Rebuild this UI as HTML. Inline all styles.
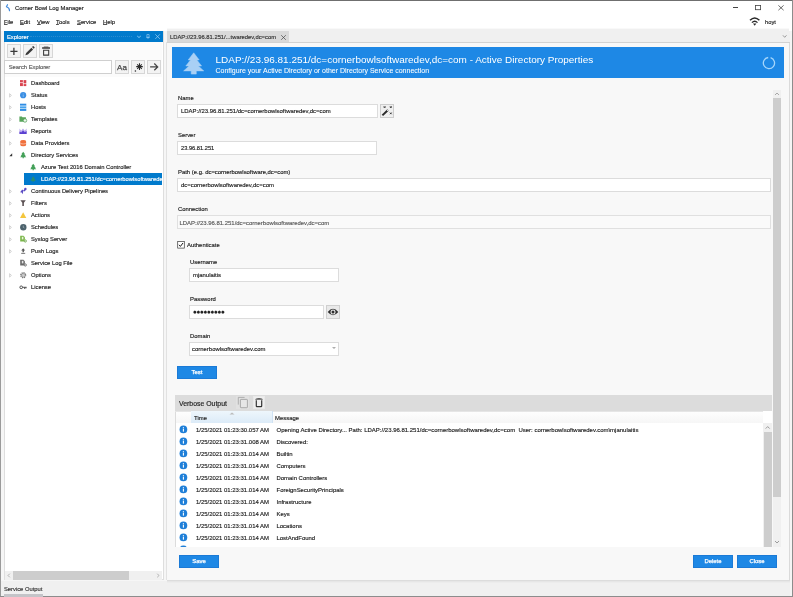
<!DOCTYPE html>
<html><head><meta charset="utf-8">
<style>
*{box-sizing:border-box;margin:0;padding:0}
html,body{width:793px;height:597px;overflow:hidden;background:#f0f0f0}
body{font-family:"Liberation Sans",sans-serif;font-size:5.9px;color:#1a1a1a;position:relative;-webkit-text-stroke:0.15px}
.a{position:absolute;white-space:nowrap}
u{text-decoration-thickness:0.45px;text-underline-offset:0.3px;text-decoration-color:#555}
.t{position:absolute;white-space:nowrap;line-height:10px;height:10px}
.btn{position:absolute;background:#1e88e5;color:#fff;text-align:center;border:1px solid #1b7ad6;-webkit-text-stroke:0.25px}
.inp{position:absolute;background:#fff;border:1px solid #dcdcdc;height:14px;line-height:12px;padding-left:3px;font-size:5.95px;color:#222}
.tb{position:absolute;background:#f3f3f3;border:1px solid #d6d6d6}
.row{position:absolute;left:0;height:12px;line-height:12px;white-space:nowrap}
</style></head><body>
<div id="root" style="position:absolute;left:0;top:0;width:793px;height:597px;will-change:transform">
<!-- window frame -->
<div class="a" style="left:0;top:0;width:793px;height:597px;background:#f0f0f0"></div>
<div class="a" style="left:1px;top:1px;width:791px;height:30px;background:#fff"></div>
<div class="a" style="left:0;top:0;width:793px;height:1px;background:#6f6f6f"></div>
<div class="a" style="left:0;top:0;width:1px;height:597px;background:#9a9a9a"></div>
<div class="a" style="left:792px;top:0;width:1px;height:597px;background:#8c8c8c"></div>
<div class="a" style="left:0;top:596px;width:793px;height:1px;background:#8c8c8c"></div>

<!-- title -->
<svg class="a" style="left:4px;top:2px" width="8" height="11" viewBox="0 0 8 11"><path d="M3.5 2.7 L2.4 4.8 Q5.6 5.7 5.5 8.7" fill="none" stroke="#3f88dc" stroke-width="1.15" stroke-linecap="round" stroke-linejoin="round"/></svg>
<div class="t" id="title" style="left:15px;top:2.5px;font-size:5.9px;color:#222">Corner Bowl Log Manager</div>
<!-- window controls -->
<div class="a" style="left:733px;top:7.2px;width:5.4px;height:0.8px;background:#444"></div>
<svg class="a" style="left:754px;top:4px" width="8" height="7" viewBox="0 0 8 7"><rect x="1.4" y="1.5" width="5.2" height="4.2" fill="none" stroke="#444" stroke-width="0.8"/></svg>
<svg class="a" style="left:778px;top:5px" width="6" height="6" viewBox="0 0 6 6"><path d="M0.4 0.4L5.6 5.2M5.6 0.4L0.4 5.2" stroke="#444" stroke-width="0.8"/></svg>
<!-- menu -->
<div class="t" style="left:4px;top:16.6px;font-size:5.8px;color:#222"><u>F</u>ile</div>
<div class="t" style="left:20px;top:16.6px;font-size:5.8px;color:#222"><u>E</u>dit</div>
<div class="t" style="left:37px;top:16.6px;font-size:5.8px;color:#222"><u>V</u>iew</div>
<div class="t" style="left:56px;top:16.6px;font-size:5.8px;color:#222"><u>T</u>ools</div>
<div class="t" style="left:77px;top:16.6px;font-size:5.8px;color:#222"><u>S</u>ervice</div>
<div class="t" style="left:103px;top:16.6px;font-size:5.8px;color:#222"><u>H</u>elp</div>
<!-- wifi + user -->
<svg class="a" style="left:749px;top:17px" width="12" height="10" viewBox="0 0 12 10"><g fill="none" stroke="#2a2a2a" stroke-width="1.5"><path d="M1 3.3 Q5.7 -1.2 10.4 3.3"/><path d="M2.9 5.6 Q5.7 2.9 8.5 5.6" stroke-width="1.3"/></g><path d="M4 6.4 L7.4 6.4 L5.7 8.7 Z" fill="#2a2a2a"/></svg>
<div class="t" style="left:765px;top:17px;font-size:5.8px;color:#222">hoyt</div>

<!-- Explorer panel -->
<div class="a" style="left:1px;top:31px;width:166px;height:550px;background:#f6f6f6"></div>
<div class="a" style="left:4px;top:31px;width:160px;height:549px;background:#fff;border:1px solid #dedede"></div>
<div class="a" style="left:4px;top:31px;width:159px;height:11px;background:#007acc"></div>
<div class="t" style="left:7px;top:32px;font-size:5.8px;color:#fff">Explorer</div>
<div class="a" style="left:30px;top:36px;width:102px;height:0;border-top:1px dotted #2a8bd0"></div>
<svg class="a" style="left:135px;top:33px" width="26" height="8" viewBox="0 0 26 8"><g fill="none" stroke="#9dd2f6"><path d="M2.2 3L4 4.5L5.8 3" stroke-width="0.85"/><path d="M11.9 1.5h2.2v2.8h-2.2zM11.2 4.4h3.6M13 4.4v1.5" stroke-width="0.6"/><path d="M20.3 1.3L24.9 5.9M24.9 1.3L20.3 5.9" stroke-width="0.7"/></g></svg>
<!-- toolbar -->
<div class="a" style="left:5px;top:42px;width:157px;height:35px;background:#fbfbfb"></div>
<div class="tb" style="left:7px;top:44px;width:14px;height:14px"></div>
<div class="tb" style="left:23px;top:44px;width:14px;height:14px"></div>
<div class="tb" style="left:39px;top:44px;width:14px;height:14px"></div>
<svg class="a" style="left:7px;top:44px" width="14" height="14" viewBox="0 0 14 14"><path d="M6.9 3.7v7.2M3.4 7.3h7.1" stroke="#3a3a3a" stroke-width="1.3"/></svg>
<svg class="a" style="left:23px;top:44px" width="14" height="14" viewBox="0 0 14 14"><path d="M2.3 11.3L3.2 8.9L8.4 3.7L10.1 5.4L4.9 10.6Z" fill="#3a3a3a"/><path d="M9 3.1L9.8 2.3Q10.3 1.9 10.8 2.4L11.4 3Q11.9 3.5 11.4 4L10.6 4.8Z" fill="#3a3a3a"/></svg>
<svg class="a" style="left:39px;top:44px" width="14" height="14" viewBox="0 0 14 14"><path d="M4.6 6.2h5.1v4.9h-5.1z" fill="none" stroke="#3a3a3a" stroke-width="1.05"/><path d="M3.1 4h7.9" stroke="#3a3a3a" stroke-width="1.5"/><path d="M4.8 3h4.6" stroke="#3a3a3a" stroke-width="0.8"/></svg>
<!-- search -->
<div class="a" style="left:4px;top:60px;width:108px;height:14px;background:#fff;border:1px solid #cfcfcf"></div>
<div class="t" style="left:8.7px;top:62.3px;font-size:5.8px;color:#5a5a5a">Search Explorer</div>
<div class="tb" style="left:115px;top:60px;width:14px;height:14px"></div>
<div class="tb" style="left:131px;top:60px;width:14px;height:14px"></div>
<div class="tb" style="left:147px;top:60px;width:14px;height:14px"></div>
<div class="t" style="left:115px;top:62.8px;width:14px;text-align:center;font-size:8px;color:#4a4a4a;-webkit-text-stroke:0.25px">Aa</div>
<svg class="a" style="left:131px;top:60px" width="14" height="14" viewBox="0 0 14 14"><g stroke="#2c2c2c" stroke-width="1.05"><path d="M8.5 3.3v6.6M5.2 6.6h6.6M6.2 4.3l4.6 4.6M10.8 4.3l-4.6 4.6"/></g><circle cx="4.4" cy="11" r="0.8" fill="#2c2c2c"/></svg>
<svg class="a" style="left:147px;top:60px" width="14" height="14" viewBox="0 0 14 14"><path d="M3.1 6.9h7M7.3 3.5L10.7 6.9L7.3 10.3" fill="none" stroke="#444" stroke-width="1.25"/></svg>

<!-- tree -->
<div id="tree" class="a" style="left:5px;top:77px;width:157px;height:493px;overflow:hidden;font-size:5.8px;color:#1e1e1e">
<svg class="a" style="left:14.9px;top:3px;overflow:visible" width="6.4" height="6.4" viewBox="0 0 6.4 6.4"><rect x="0" y="0.1" width="2.9" height="2.3" fill="#d9434e"/><rect x="3.6" y="0.1" width="2.7" height="3.3" fill="#d9434e"/><rect x="0" y="3.1" width="2.9" height="3" fill="#d9434e"/><rect x="3.6" y="4.1" width="2.7" height="2" fill="#d9434e"/></svg>
<div class="row" style="left:26px;top:0px;">Dashboard</div>
<svg class="a" style="left:4px;top:15.5px" width="4" height="5" viewBox="0 0 4 5"><path d="M0.6 0.7L2.4 2.4L0.6 4.1Z" fill="none" stroke="#b0b0b0" stroke-width="0.55"/></svg>
<svg class="a" style="left:14.9px;top:15px;overflow:visible" width="6.4" height="6.4" viewBox="0 0 6.4 6.4"><circle cx="3.15" cy="3.2" r="3.1" fill="#3c8fe3"/><rect x="2.8" y="2.8" width="0.75" height="2.1" fill="#9cc8f3"/><rect x="2.8" y="1.5" width="0.75" height="0.8" fill="#9cc8f3"/></svg>
<div class="row" style="left:26px;top:12px;">Status</div>
<svg class="a" style="left:4px;top:27.5px" width="4" height="5" viewBox="0 0 4 5"><path d="M0.6 0.7L2.4 2.4L0.6 4.1Z" fill="none" stroke="#b0b0b0" stroke-width="0.55"/></svg>
<svg class="a" style="left:14.9px;top:27px;overflow:visible" width="6.4" height="6.4" viewBox="0 0 6.4 6.4"><rect x="0" y="-0.3" width="6.3" height="2" fill="#2f8de4"/><rect x="0" y="2.3" width="6.3" height="2.1" fill="#45a3ee"/><rect x="0" y="5" width="6.3" height="1.9" fill="#2f8de4"/><rect x="0" y="1.7" width="6.3" height="0.6" fill="#a8d4f7"/><rect x="0" y="4.4" width="6.3" height="0.6" fill="#a8d4f7"/></svg>
<div class="row" style="left:26px;top:24px;">Hosts</div>
<svg class="a" style="left:4px;top:39.5px" width="4" height="5" viewBox="0 0 4 5"><path d="M0.6 0.7L2.4 2.4L0.6 4.1Z" fill="none" stroke="#b0b0b0" stroke-width="0.55"/></svg>
<svg class="a" style="left:14.9px;top:39px;overflow:visible" width="6.4" height="6.4" viewBox="0 0 6.4 6.4"><path d="M-0.6 0.6h2.4l0.7 0.7h3.4v4.4h-6.5z" fill="#58a55c"/><circle cx="5" cy="4.5" r="1.75" fill="#eef6ee" stroke="#4a9a50" stroke-width="0.7"/></svg>
<div class="row" style="left:26px;top:36px;">Templates</div>
<svg class="a" style="left:4px;top:51.5px" width="4" height="5" viewBox="0 0 4 5"><path d="M0.6 0.7L2.4 2.4L0.6 4.1Z" fill="none" stroke="#b0b0b0" stroke-width="0.55"/></svg>
<svg class="a" style="left:14.9px;top:51px;overflow:visible" width="6.4" height="6.4" viewBox="0 0 6.4 6.4"><path d="M-0.5 6.1V0.6L1.2 2.8L3 0.4L4.8 2.8L6.6 0.4V6.1Z" fill="#b7a8ee"/><path d="M-0.5 6.1V3.6L1.2 4.4L3 2.6L4.8 4.2L6.6 3V6.1Z" fill="#5a3fd0"/></svg>
<div class="row" style="left:26px;top:48px;">Reports</div>
<svg class="a" style="left:4px;top:63.5px" width="4" height="5" viewBox="0 0 4 5"><path d="M0.6 0.7L2.4 2.4L0.6 4.1Z" fill="none" stroke="#b0b0b0" stroke-width="0.55"/></svg>
<svg class="a" style="left:14.9px;top:63px;overflow:visible" width="6.4" height="6.4" viewBox="0 0 6.4 6.4"><ellipse cx="3.2" cy="1.3" rx="2.9" ry="1.3" fill="#f0703c"/><path d="M0.3 1.3h5.8v3.6a2.9 1.3 0 0 1-5.8 0z" fill="#f0703c"/><path d="M0.3 2.9a2.9 1.1 0 0 0 5.8 0" fill="none" stroke="#fbd3c2" stroke-width="0.7"/></svg>
<div class="row" style="left:26px;top:60px;">Data Providers</div>
<svg class="a" style="left:3.5px;top:75.5px" width="4" height="4" viewBox="0 0 4 4"><path d="M3.2 0.3V3.2H0.3Z" fill="#333"/></svg>
<svg class="a" style="left:14.9px;top:75px;overflow:visible" width="6.4" height="6.4" viewBox="0 0 6.4 6.4"><path d="M3.2 -0.2L4.9 2H4.2L5.7 3.8H4.9L6.3 5.2H3.8V6.2H2.6V5.2H0.1L1.5 3.8H0.7L2.2 2H1.5Z" fill="#43a058"/></svg>
<div class="row" style="left:26px;top:72px;">Directory Services</div>
<svg class="a" style="left:24.9px;top:87px;overflow:visible" width="6.4" height="6.4" viewBox="0 0 6.4 6.4"><path d="M3.2 -0.2L4.9 2H4.2L5.7 3.8H4.9L6.3 5.2H3.8V6.2H2.6V5.2H0.1L1.5 3.8H0.7L2.2 2H1.5Z" fill="#43a058"/></svg>
<div class="row" style="left:36px;top:84px;">Azure Test 2016 Domain Controller</div>
<div class="a" style="left:19px;top:96px;width:139px;height:12px;background:#007acc"></div>
<svg class="a" style="left:24.9px;top:99px;overflow:visible" width="6.4" height="6.4" viewBox="0 0 6.4 6.4"><path d="M3.2 0.2L4.7 2.2H4.1L5.4 3.8H4.7L5.9 5.1H3.7V5.9H2.7V5.1H0.5L1.7 3.8H1L2.3 2.2H1.7Z" fill="#2f8f63" opacity="0.85"/></svg>
<div class="row" style="left:36px;top:96px;color:#fff;">LDAP://23.96.81.251/dc=cornerbowlsoftwaredev,dc=com</div>
<svg class="a" style="left:4px;top:111.5px" width="4" height="5" viewBox="0 0 4 5"><path d="M0.6 0.7L2.4 2.4L0.6 4.1Z" fill="none" stroke="#b0b0b0" stroke-width="0.55"/></svg>
<svg class="a" style="left:14.9px;top:111px;overflow:visible" width="6.4" height="6.4" viewBox="0 0 6.4 6.4"><path d="M0.1 4.2L2.2 1.6L3.4 2.4L5.2 0.2L6.2 1.4L4.4 3.4L3.4 2.8L2.6 6.2L1.7 4.6Z" fill="#5b4cc4"/><circle cx="5.4" cy="1" r="1.2" fill="#5b4cc4"/></svg>
<div class="row" style="left:26px;top:108px;">Continuous Delivery Pipelines</div>
<svg class="a" style="left:4px;top:123.5px" width="4" height="5" viewBox="0 0 4 5"><path d="M0.6 0.7L2.4 2.4L0.6 4.1Z" fill="none" stroke="#b0b0b0" stroke-width="0.55"/></svg>
<svg class="a" style="left:14.9px;top:123px;overflow:visible" width="6.4" height="6.4" viewBox="0 0 6.4 6.4"><path d="M0.4 0.3h5.4L3.9 2.8V5.9H2.3V2.8Z" fill="#5c5254"/></svg>
<div class="row" style="left:26px;top:120px;">Filters</div>
<svg class="a" style="left:4px;top:135.5px" width="4" height="5" viewBox="0 0 4 5"><path d="M0.6 0.7L2.4 2.4L0.6 4.1Z" fill="none" stroke="#b0b0b0" stroke-width="0.55"/></svg>
<svg class="a" style="left:14.9px;top:135px;overflow:visible" width="6.4" height="6.4" viewBox="0 0 6.4 6.4"><path d="M3.15 0.2L6.3 5.9H0Z" fill="#f4c63d"/></svg>
<div class="row" style="left:26px;top:132px;">Actions</div>
<svg class="a" style="left:4px;top:147.5px" width="4" height="5" viewBox="0 0 4 5"><path d="M0.6 0.7L2.4 2.4L0.6 4.1Z" fill="none" stroke="#b0b0b0" stroke-width="0.55"/></svg>
<svg class="a" style="left:14.9px;top:147px;overflow:visible" width="6.4" height="6.4" viewBox="0 0 6.4 6.4"><circle cx="3.3" cy="3.2" r="3.2" fill="#4c626c"/><path d="M3.3 1.6V3.4L4.4 4" fill="none" stroke="#b9c6cc" stroke-width="0.6"/></svg>
<div class="row" style="left:26px;top:144px;">Schedules</div>
<svg class="a" style="left:4px;top:159.5px" width="4" height="5" viewBox="0 0 4 5"><path d="M0.6 0.7L2.4 2.4L0.6 4.1Z" fill="none" stroke="#b0b0b0" stroke-width="0.55"/></svg>
<svg class="a" style="left:14.9px;top:159px;overflow:visible" width="6.4" height="6.4" viewBox="0 0 6.4 6.4"><path d="M0.2 -0.3h3.2L4.9 1.2V5.6H0.2Z" fill="#7ab648"/><path d="M1.8 0.8h1.6v2.6h-1.6z" fill="#e9f4df"/><circle cx="5.3" cy="5" r="1.5" fill="#fff"/><circle cx="5.3" cy="5" r="1.1" fill="none" stroke="#5a9a34" stroke-width="0.8"/></svg>
<div class="row" style="left:26px;top:156px;">Syslog Server</div>
<svg class="a" style="left:4px;top:171.5px" width="4" height="5" viewBox="0 0 4 5"><path d="M0.6 0.7L2.4 2.4L0.6 4.1Z" fill="none" stroke="#b0b0b0" stroke-width="0.55"/></svg>
<svg class="a" style="left:14.9px;top:171px;overflow:visible" width="6.4" height="6.4" viewBox="0 0 6.4 6.4"><path d="M3.2 0.3L5.2 2.6H3.9V4.2H2.5V2.6H1.2Z" fill="#555"/><rect x="1.2" y="4.9" width="4" height="0.8" fill="#555"/></svg>
<div class="row" style="left:26px;top:168px;">Push Logs</div>
<svg class="a" style="left:14.9px;top:183px;overflow:visible" width="6.4" height="6.4" viewBox="0 0 6.4 6.4"><path d="M0.2 -0.3h3.2L4.9 1.2V5.6H0.2Z" fill="#6a6a6a"/><path d="M1.8 0.8h1.6v2.6h-1.6z" fill="#e6e6e6"/><circle cx="5.3" cy="5" r="1.5" fill="#fff"/><circle cx="5.3" cy="5" r="1.1" fill="none" stroke="#555" stroke-width="0.8"/></svg>
<div class="row" style="left:26px;top:180px;">Service Log File</div>
<svg class="a" style="left:4px;top:195.5px" width="4" height="5" viewBox="0 0 4 5"><path d="M0.6 0.7L2.4 2.4L0.6 4.1Z" fill="none" stroke="#b0b0b0" stroke-width="0.55"/></svg>
<svg class="a" style="left:14.9px;top:195px;overflow:visible" width="6.4" height="6.4" viewBox="0 0 6.4 6.4"><circle cx="3.2" cy="3.2" r="2.5" fill="none" stroke="#7a7a7a" stroke-width="1.2" stroke-dasharray="1.2 0.76"/><circle cx="3.2" cy="3.2" r="1.9" fill="none" stroke="#7a7a7a" stroke-width="0.7"/><circle cx="3.2" cy="3.2" r="0.9" fill="none" stroke="#7a7a7a" stroke-width="0.5"/></svg>
<div class="row" style="left:26px;top:192px;">Options</div>
<svg class="a" style="left:14.9px;top:207px;overflow:visible" width="6.4" height="6.4" viewBox="0 0 6.4 6.4"><circle cx="1.2" cy="3.3" r="1.35" fill="none" stroke="#444" stroke-width="0.9"/><path d="M2.6 3.3H6.6M4.6 3.3V4.9M5.9 3.3V4.5" stroke="#444" stroke-width="0.9" fill="none"/></svg>
<div class="row" style="left:26px;top:204px;">License</div>
</div><!--/tree-->

<!-- explorer hscroll -->
<div class="a" style="left:5px;top:571px;width:157px;height:9px;background:#f0f0f0"></div>
<div class="a" style="left:13px;top:571px;width:116px;height:9px;background:#cdcdcd"></div>
<svg class="a" style="left:5px;top:571px" width="157" height="9" viewBox="0 0 157 9"><path d="M4.8 2.7L3 4.5L4.8 6.3M152.2 2.7L154 4.5L152.2 6.3" fill="none" stroke="#9a9a9a" stroke-width="0.7"/></svg>
<!-- status -->
<div class="t" style="left:4px;top:584px;font-size:5.8px;color:#333">Service Output</div>
<div class="a" style="left:4px;top:594px;width:39px;height:3px;background:#c4c4c8"></div>

<!-- main panel -->
<div class="a" style="left:167px;top:28px;width:622px;height:1px;background:#f9f9f9"></div><div class="a" style="left:167px;top:29px;width:622px;height:13px;background:#f0f0f0"></div><div class="a" style="left:790px;top:31px;width:2px;height:565px;background:#f5f5f5"></div>
<div class="a" style="left:166px;top:42px;width:624px;height:538px;background:#f8f8f8;border-left:1px solid #e2e2e2;border-right:1px solid #dadada"></div>
<div class="a" style="left:167px;top:42px;width:623px;height:1px;background:#d2d2d2"></div>
<div class="a" style="left:167px;top:580px;width:623px;height:1px;background:#dcdcdc"></div><div class="a" style="left:167px;top:581px;width:623px;height:1px;background:#e6e6e6"></div><div class="a" style="left:167px;top:582px;width:623px;height:1px;background:#ececec"></div>
<!-- tab -->
<div class="a" style="left:167px;top:31px;width:122px;height:11px;background:#d9d9d9"></div>
<div class="t" style="left:170px;top:32px;font-size:5.83px;color:#333">LDAP://23.96.81.251/...twaredev,dc=com</div>
<svg class="a" style="left:280px;top:33.5px" width="7" height="7" viewBox="0 0 7 7"><path d="M1.2 1.2L5.8 5.8M5.8 1.2L1.2 5.8" stroke="#444" stroke-width="0.7"/></svg>
<svg class="a" style="left:781px;top:33px" width="7" height="6" viewBox="0 0 7 6"><path d="M1.9 2.3L3.7 4.3L5.5 2.3" fill="none" stroke="#777" stroke-width="0.7"/></svg>
<!-- banner -->
<div class="a" style="left:172px;top:47px;width:612px;height:31px;background:#1e88e5"></div>
<svg class="a" style="left:183px;top:52px" width="22" height="23" viewBox="0 0 22 23"><path d="M10.7 0.8L16.2 7.9H13.9L18.6 14H15.4L20.8 18.9H13.3V22.1H8.2V18.9H0.6L6 14H2.8L7.5 7.9H5.2Z" fill="#a9d0f5" stroke="#a9d0f5" stroke-width="0.5" stroke-linejoin="round"/></svg>
<div class="a" id="btitle" style="-webkit-text-stroke:0;left:215.5px;top:52.5px;font-size:9.98px;line-height:13px;color:#fff">LDAP://23.96.81.251/dc=cornerbowlsoftwaredev,dc=com - Active Directory Properties</div>
<div class="a" id="bsub" style="-webkit-text-stroke:0.05px;left:215.5px;top:66px;font-size:7px;line-height:9px;color:#fff">Configure your Active Directory or other Directory Service connection</div>
<svg class="a" style="left:760.6px;top:55.1px" width="16" height="16" viewBox="0 0 16 16"><path d="M9.6 2.7A5.6 5.6 0 1 1 7.2 2.5" fill="none" stroke="#a6d6fb" stroke-width="1.3"/></svg>

<!-- form -->
<div class="t" style="left:178px;top:93px;">Name</div>
<div class="inp" style="left:177px;top:104px;width:201px">LDAP://23.96.81.251/dc=cornerbowlsoftwaredev,dc=com</div>
<div class="tb" style="left:380px;top:104px;width:14px;height:14px;background:#efefef;border-color:#cdcdcd"></div>
<svg class="a" style="left:380px;top:104px" width="14" height="14" viewBox="0 0 14 14"><path d="M2.4 11.4L8 6" stroke="#2a2a2a" stroke-width="2"/><path d="M7.2 6.8L8.2 5.8" stroke="#eee" stroke-width="1.2"/><path d="M3.8 2.3l1.6 1.6M5.4 2.3l-1.6 1.6M10 2.3l1.6 1.6M11.6 2.3l-1.6 1.6M10 8.6l1.6 1.6M11.6 8.6l-1.6 1.6" stroke="#2a2a2a" stroke-width="0.95"/></svg>

<div class="t" style="left:178px;top:130px;">Server</div>
<div class="inp" style="left:177px;top:141px;width:200px;font-size:5.7px">23.96.81.251</div>

<div class="t" style="left:178px;top:167px;">Path (e.g. dc=cornerbowlsoftware,dc=com)</div>
<div class="inp" style="left:177px;top:178px;width:594px">dc=cornerbowlsoftwaredev,dc=com</div>

<div class="t" style="left:178px;top:204px;">Connection</div>
<div class="inp" style="left:177px;top:215px;width:594px;background:#fafafa;border-color:#e0e0e0;color:#5a5a5a;padding-left:1.5px;line-height:14px">LDAP://23.96.81.251/dc=cornerbowlsoftwaredev,dc=com</div>

<svg class="a" style="left:177px;top:241px" width="8" height="8" viewBox="0 0 8 8"><rect x="0.7" y="0.5" width="6.6" height="6.6" fill="#fff" stroke="#3a3a3a" stroke-width="0.7"/><path d="M2 3.8L3.4 5.4L6 2" fill="none" stroke="#1a1a1a" stroke-width="1"/></svg>
<div class="t" style="left:187px;top:240px;">Authenticate</div>

<div class="t" style="left:190px;top:257px;">Username</div>
<div class="inp" style="left:189px;top:268px;width:150px">mjanulaitis</div>

<div class="t" style="left:190px;top:294px;">Password</div>
<div class="inp" style="left:189px;top:305px;width:135px;font-size:6.4px;letter-spacing:-0.35px;line-height:11.5px">●●●●●●●●●</div>
<div class="tb" style="left:326px;top:305px;width:14px;height:14px;background:#e9e9e9;border-color:#cfcfcf"></div>
<svg class="a" style="left:326px;top:305px" width="14" height="14" viewBox="0 0 14 14"><path d="M1.7 7Q7 0.6 12.3 7Q7 13.4 1.7 7Z" fill="#2e2e2e"/><circle cx="7" cy="7" r="2.5" fill="#ededed"/><circle cx="7" cy="7" r="1.5" fill="#2e2e2e"/></svg>

<div class="t" style="left:190px;top:331px;">Domain</div>
<div class="inp" style="left:189px;top:342px;width:150px;padding-left:2px">cornerbowlsoftwaredev.com</div>
<svg class="a" style="left:331.3px;top:345.3px" width="6" height="6" viewBox="0 0 6 6"><path d="M1.7 2L3 3.4L4.3 2" fill="none" stroke="#444" stroke-width="0.65"/></svg>

<div class="btn" style="left:177px;top:366px;width:40px;height:13px;line-height:11px;font-size:5.95px">Test</div>

<!-- outer scrollbar -->
<div class="a" style="left:773px;top:90px;width:8px;height:457px;background:#f0f0f0"></div>
<div class="a" style="left:773px;top:98px;width:8px;height:399px;background:#cdcdcd"></div>
<svg class="a" style="left:773px;top:91px" width="8" height="6" viewBox="0 0 8 6"><path d="M2 4L4 2L6 4" fill="none" stroke="#888" stroke-width="0.7"/></svg>

<!-- verbose output -->
<div class="a" style="left:175px;top:395px;width:597px;height:16px;background:#dcdcdc"></div>
<div class="t" style="left:179px;top:399px;font-size:6.9px;color:#222">Verbose Output</div>
<div class="a" style="left:236px;top:396px;width:13px;height:13px;background:#e1e1e1"></div>
<svg class="a" style="left:237px;top:396px" width="12" height="13" viewBox="0 0 12 13"><path d="M1.3 8.6V1.4H7.6" fill="none" stroke="#9a9a9a" stroke-width="0.7"/><rect x="3.4" y="3.4" width="7" height="8.3" rx="0.6" fill="#e6e6e6" stroke="#9a9a9a" stroke-width="0.8"/></svg>
<div class="tb" style="left:253px;top:396px;width:12px;height:13px;background:#efefef;border-color:#e9e9e9"></div>
<svg class="a" style="left:253px;top:396px" width="12" height="13" viewBox="0 0 12 13"><path d="M2.2 3.8Q2.4 2.2 6 2.1Q9.6 2.2 9.8 3.8Z" fill="#5a5a5a"/><path d="M3.3 4.2V10Q3.3 10.6 3.9 10.6H8.1Q8.7 10.6 8.7 10V4.2" fill="none" stroke="#333" stroke-width="1.2"/></svg>
<div id="list" class="a" style="left:175px;top:411px;width:597px;height:136px;background:#fff;overflow:hidden;font-size:5.95px;color:#222">
<div class="a" style="left:0;top:0;width:1px;height:136px;background:#dcdcdc"></div>
<div class="a" style="left:1px;top:0;width:587px;height:12px;background:linear-gradient(#ffffff,#f6f6f6)"></div>
<div class="a" style="left:0;top:0;width:597px;height:1px;background:#e6e6e6"></div>
<div class="a" style="left:16px;top:0;width:82px;height:12px;background:linear-gradient(#eef6fc,#dcebf8);border-right:1px solid #cfe2f3"></div>
<svg class="a" style="left:54px;top:1px" width="6" height="3" viewBox="0 0 6 3"><path d="M0.5 2.5L3 0.5L5.5 2.5Z" fill="#bbb"/></svg>
<div class="row" style="left:19px;top:1px">Time</div>
<div class="row" style="left:100px;top:1px">Message</div>
<svg class="a" style="left:4px;top:14px" width="9" height="9" viewBox="0 0 9 9"><circle cx="4.4" cy="4.45" r="3.85" fill="#1f7fd8"/><rect x="3.85" y="3.85" width="1.1" height="2.8" fill="#fff"/><rect x="3.85" y="2.2" width="1.1" height="1.1" fill="#fff"/></svg>
<div class="row" style="left:21px;top:12.5px">1/25/2021 01:23:30.057 AM</div>
<div class="row" style="left:101.5px;top:12.5px;font-size:5.99px;">Opening Active Directory...  Path: LDAP://23.96.81.251/dc=cornerbowlsoftwaredev,dc=com &nbsp;User: cornerbowlsoftwaredev.com\mjanulaitis</div>
<svg class="a" style="left:4px;top:26px" width="9" height="9" viewBox="0 0 9 9"><circle cx="4.4" cy="4.45" r="3.85" fill="#1f7fd8"/><rect x="3.85" y="3.85" width="1.1" height="2.8" fill="#fff"/><rect x="3.85" y="2.2" width="1.1" height="1.1" fill="#fff"/></svg>
<div class="row" style="left:21px;top:24.5px">1/25/2021 01:23:31.008 AM</div>
<div class="row" style="left:101.5px;top:24.5px;">Discovered:</div>
<svg class="a" style="left:4px;top:38px" width="9" height="9" viewBox="0 0 9 9"><circle cx="4.4" cy="4.45" r="3.85" fill="#1f7fd8"/><rect x="3.85" y="3.85" width="1.1" height="2.8" fill="#fff"/><rect x="3.85" y="2.2" width="1.1" height="1.1" fill="#fff"/></svg>
<div class="row" style="left:21px;top:36.5px">1/25/2021 01:23:31.014 AM</div>
<div class="row" style="left:101.5px;top:36.5px;">Builtin</div>
<svg class="a" style="left:4px;top:50px" width="9" height="9" viewBox="0 0 9 9"><circle cx="4.4" cy="4.45" r="3.85" fill="#1f7fd8"/><rect x="3.85" y="3.85" width="1.1" height="2.8" fill="#fff"/><rect x="3.85" y="2.2" width="1.1" height="1.1" fill="#fff"/></svg>
<div class="row" style="left:21px;top:48.5px">1/25/2021 01:23:31.014 AM</div>
<div class="row" style="left:101.5px;top:48.5px;">Computers</div>
<svg class="a" style="left:4px;top:62px" width="9" height="9" viewBox="0 0 9 9"><circle cx="4.4" cy="4.45" r="3.85" fill="#1f7fd8"/><rect x="3.85" y="3.85" width="1.1" height="2.8" fill="#fff"/><rect x="3.85" y="2.2" width="1.1" height="1.1" fill="#fff"/></svg>
<div class="row" style="left:21px;top:60.5px">1/25/2021 01:23:31.014 AM</div>
<div class="row" style="left:101.5px;top:60.5px;">Domain Controllers</div>
<svg class="a" style="left:4px;top:74px" width="9" height="9" viewBox="0 0 9 9"><circle cx="4.4" cy="4.45" r="3.85" fill="#1f7fd8"/><rect x="3.85" y="3.85" width="1.1" height="2.8" fill="#fff"/><rect x="3.85" y="2.2" width="1.1" height="1.1" fill="#fff"/></svg>
<div class="row" style="left:21px;top:72.5px">1/25/2021 01:23:31.014 AM</div>
<div class="row" style="left:101.5px;top:72.5px;">ForeignSecurityPrincipals</div>
<svg class="a" style="left:4px;top:86px" width="9" height="9" viewBox="0 0 9 9"><circle cx="4.4" cy="4.45" r="3.85" fill="#1f7fd8"/><rect x="3.85" y="3.85" width="1.1" height="2.8" fill="#fff"/><rect x="3.85" y="2.2" width="1.1" height="1.1" fill="#fff"/></svg>
<div class="row" style="left:21px;top:84.5px">1/25/2021 01:23:31.014 AM</div>
<div class="row" style="left:101.5px;top:84.5px;">Infrastructure</div>
<svg class="a" style="left:4px;top:98px" width="9" height="9" viewBox="0 0 9 9"><circle cx="4.4" cy="4.45" r="3.85" fill="#1f7fd8"/><rect x="3.85" y="3.85" width="1.1" height="2.8" fill="#fff"/><rect x="3.85" y="2.2" width="1.1" height="1.1" fill="#fff"/></svg>
<div class="row" style="left:21px;top:96.5px">1/25/2021 01:23:31.014 AM</div>
<div class="row" style="left:101.5px;top:96.5px;">Keys</div>
<svg class="a" style="left:4px;top:110px" width="9" height="9" viewBox="0 0 9 9"><circle cx="4.4" cy="4.45" r="3.85" fill="#1f7fd8"/><rect x="3.85" y="3.85" width="1.1" height="2.8" fill="#fff"/><rect x="3.85" y="2.2" width="1.1" height="1.1" fill="#fff"/></svg>
<div class="row" style="left:21px;top:108.5px">1/25/2021 01:23:31.014 AM</div>
<div class="row" style="left:101.5px;top:108.5px;">Locations</div>
<svg class="a" style="left:4px;top:122px" width="9" height="9" viewBox="0 0 9 9"><circle cx="4.4" cy="4.45" r="3.85" fill="#1f7fd8"/><rect x="3.85" y="3.85" width="1.1" height="2.8" fill="#fff"/><rect x="3.85" y="2.2" width="1.1" height="1.1" fill="#fff"/></svg>
<div class="row" style="left:21px;top:120.5px">1/25/2021 01:23:31.014 AM</div>
<div class="row" style="left:101.5px;top:120.5px;">LostAndFound</div>
<svg class="a" style="left:4px;top:134px" width="9" height="9" viewBox="0 0 9 9"><circle cx="4.4" cy="4.45" r="3.85" fill="#1f7fd8"/><rect x="3.85" y="3.85" width="1.1" height="2.8" fill="#fff"/><rect x="3.85" y="2.2" width="1.1" height="1.1" fill="#fff"/></svg>
<div class="row" style="left:21px;top:132.5px">1/25/2021 01:23:31.014 AM</div>
<div class="row" style="left:101.5px;top:132.5px;">Managed Service Accounts</div>
</div><!--/list-->
<!-- inner scrollbar -->
<div class="a" style="left:763px;top:411px;width:9px;height:12px;background:#fff"></div>
<div class="a" style="left:763px;top:423px;width:9px;height:124px;background:#f0f0f0"></div>
<div class="a" style="left:764px;top:432px;width:8px;height:115px;background:#cdcdcd"></div>
<svg class="a" style="left:763px;top:423px" width="9" height="124" viewBox="0 0 9 124"><path d="M2.7 5.6L4.7 3.6L6.7 5.6" fill="none" stroke="#777" stroke-width="0.7"/></svg>
<svg class="a" style="left:773px;top:538px" width="8" height="8" viewBox="0 0 8 8"><path d="M2 3L4 5L6 3" fill="none" stroke="#777" stroke-width="0.7"/></svg>

<!-- bottom buttons -->
<div class="btn" style="left:179px;top:555px;width:40px;height:13px;line-height:11px;font-size:5.95px">Save</div>
<div class="btn" style="left:693px;top:555px;width:40px;height:13px;line-height:11px;font-size:5.95px">Delete</div>
<div class="btn" style="left:737px;top:555px;width:40px;height:13px;line-height:11px;font-size:5.95px">Close</div>

</div>
</body></html>
